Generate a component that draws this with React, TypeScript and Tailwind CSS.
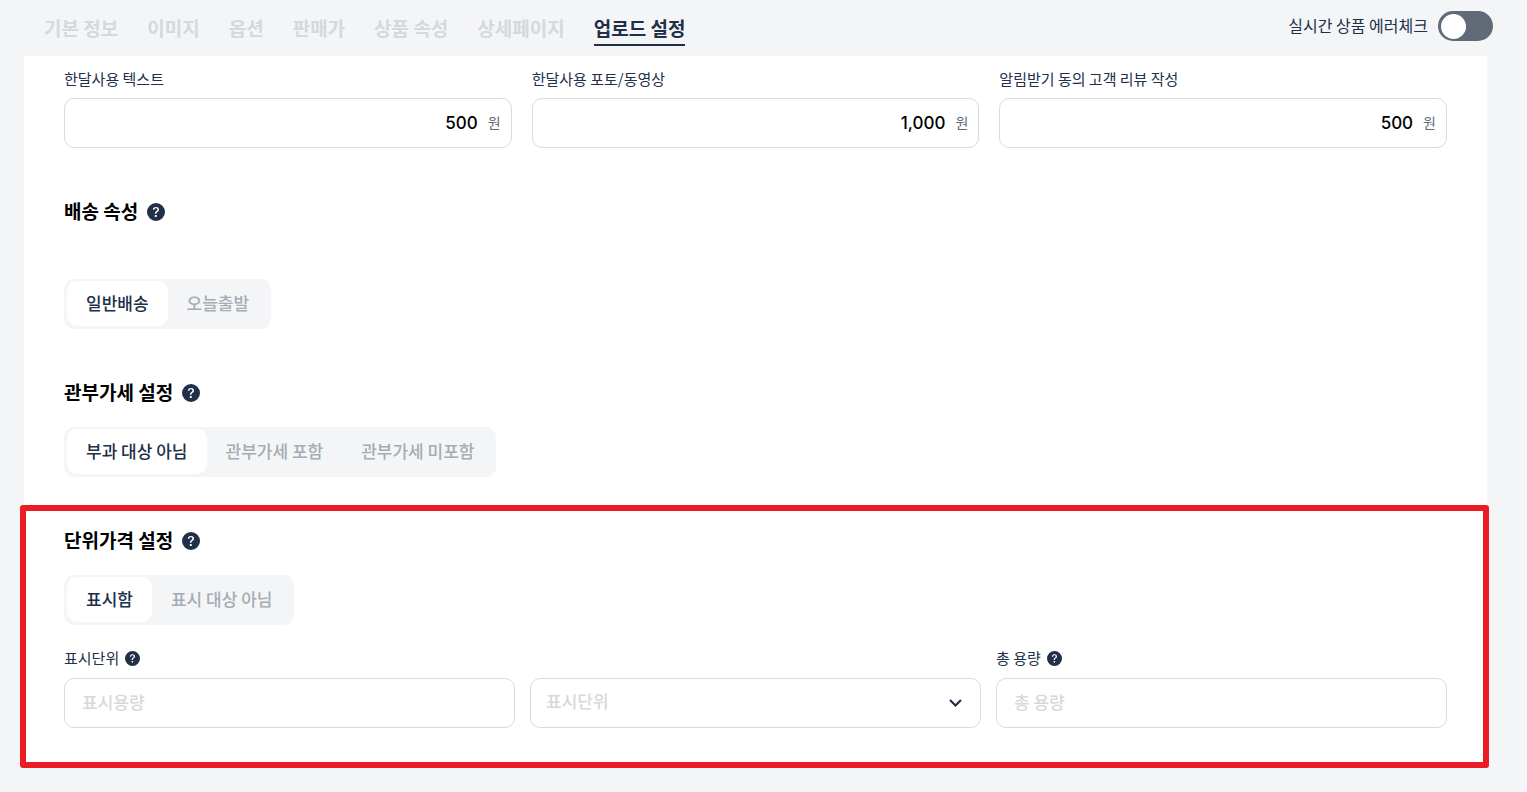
import { useId, useState } from "react";
import { BsQuestionCircleFill } from "react-icons/bs";

const tabs = ["기본 정보", "이미지", "옵션", "판매가", "상품 속성", "상세페이지", "업로드 설정"];

const reviewPoints = [
  { label: "한달사용 텍스트", amount: "500" },
  { label: "한달사용 포토/동영상", amount: "1,000" },
  { label: "알림받기 동의 고객 리뷰 작성", amount: "500" },
];

function Tabs() {
  const [active, setActive] = useState("업로드 설정");
  return (
    <nav className="flex gap-[29px]">
      {tabs.map((tab) => (
        <button
          key={tab}
          type="button"
          onClick={() => setActive(tab)}
          className={
            tab === active
              ? "border-b-2 border-[#212f48] text-[19px] leading-8 font-bold text-[#212f48]"
              : "border-b-2 border-transparent text-[19px] leading-8 font-bold text-[#d5d8dc]"
          }
        >
          {tab}
        </button>
      ))}
    </nav>
  );
}

function ErrorCheckSwitch() {
  const [on, setOn] = useState(false);
  return (
    <label className="flex items-center gap-2.5 text-base text-[#212f48]">
      <span className="pb-0.5">실시간 상품 에러체크</span>
      <input
        type="checkbox"
        role="switch"
        checked={on}
        onChange={(e) => setOn(e.target.checked)}
        className="flex h-[30px] w-[55px] cursor-pointer appearance-none items-center rounded-full bg-[#616b77] px-[3px] before:size-[25px] before:rounded-full before:bg-white checked:justify-end checked:bg-[#212f48]"
      />
    </label>
  );
}

function HelpButton({ topic, small = false }: { topic: string; small?: boolean }) {
  return (
    <button type="button" aria-label={`${topic} 도움말`} className="text-[#212f48]">
      <BsQuestionCircleFill className={small ? "size-[15px]" : "size-[18px]"} />
    </button>
  );
}

function Heading({ children }: { children: string }) {
  return (
    <div className="flex items-center gap-[9px]">
      <h2 className="pb-0.5 text-[19px] leading-[26px] font-bold text-black">{children}</h2>
      <HelpButton topic={children} />
    </div>
  );
}

function Segmented({ label, options }: { label: string; options: string[] }) {
  const [selected, setSelected] = useState(options[0]);
  return (
    <div role="group" aria-label={label} className="flex h-[50px] w-fit rounded-[10px] bg-[#f3f5f7] px-[3px] pt-0.5 pb-[3px]">
      {options.map((option) => (
        <button
          key={option}
          type="button"
          aria-pressed={option === selected}
          onClick={() => setSelected(option)}
          className={
            option === selected
              ? "rounded-[10px] bg-white px-[19px] pb-0.5 text-[17px] font-medium text-[#212f48]"
              : "rounded-[10px] px-[19px] pb-0.5 text-[17px] font-medium text-[#a6abb4]"
          }
        >
          {option}
        </button>
      ))}
    </div>
  );
}

function PointField({ label, amount }: { label: string; amount: string }) {
  const id = useId();
  return (
    <div className="flex flex-col gap-2">
      <label htmlFor={id} className="text-[15px] leading-[22px] text-[#212f48]">
        {label}
      </label>
      <div className="flex h-[50px] items-center gap-2.5 rounded-[10px] border border-[#d9dbde] bg-white px-2.5">
        <input
          id={id}
          defaultValue={amount}
          className="w-full min-w-0 flex-1 pt-0.5 text-right font-['Inter','Noto_Sans_CJK_KR',sans-serif] text-[17px] font-medium text-black outline-none"
        />
        <span className="pb-0.5 text-sm text-[#616b77]">원</span>
      </div>
    </div>
  );
}

const fieldClass =
  "h-[50px] w-full min-w-0 rounded-[10px] border border-[#d9dbde] bg-white px-[17px] pb-1 text-[17px] font-medium outline-none placeholder:text-[#d5d8dc]";

export default function App() {
  return (
    <div className="min-h-screen bg-[#f3f5f7] pb-6 font-['Noto_Sans_CJK_KR',sans-serif]">
      <header className="flex h-14 items-center justify-between pr-[34px] pb-1 pl-11">
        <div className="pt-1.5">
          <Tabs />
        </div>
        <ErrorCheckSwitch />
      </header>

      <main className="mr-10 ml-6 bg-white px-10 pt-3">
        <section className="grid grid-cols-3 gap-5">
          {reviewPoints.map((item) => (
            <PointField key={item.label} {...item} />
          ))}
        </section>

        <section className="mt-[50px] flex flex-col gap-[53px]">
          <Heading>배송 속성</Heading>
          <Segmented label="배송 속성" options={["일반배송", "오늘출발"]} />
        </section>

        <section className="mt-[50px] flex flex-col gap-5">
          <Heading>관부가세 설정</Heading>
          <Segmented label="관부가세 설정" options={["부과 대상 아님", "관부가세 포함", "관부가세 미포함"]} />
        </section>

        <section className="mt-7 -mr-[42px] -ml-11 rounded-[3px] border-6 border-[#eb1c24] bg-white pt-4 pr-9 pb-[34px] pl-[38px]">
          <div className="flex flex-col gap-5">
            <Heading>단위가격 설정</Heading>
            <Segmented label="단위가격 설정" options={["표시함", "표시 대상 아님"]} />
          </div>

          <div className="mt-[22px] grid grid-cols-3 gap-x-[15px]">
            <div className="col-span-2 flex flex-col gap-[9px]">
              <div className="flex items-center gap-1.5">
                <label htmlFor="unit-amount" className="text-[15px] leading-[22px] text-[#212f48]">
                  표시단위
                </label>
                <HelpButton topic="표시단위" small />
              </div>
              <div className="grid grid-cols-2 gap-[15px]">
                <input id="unit-amount" placeholder="표시용량" className={fieldClass} />
                <div className="relative">
                  <select
                    aria-label="표시단위"
                    defaultValue=""
                    className="h-[50px] w-full appearance-none rounded-[10px] border border-[#d9dbde] bg-white px-[15px] pb-1 text-[17px] font-medium text-[#d5d8dc] outline-none"
                  >
                    <option value="" disabled>
                      표시단위
                    </option>
                    <option value="g">g</option>
                    <option value="ml">ml</option>
                  </select>
                  <svg
                    viewBox="0 0 14 10"
                    className="pointer-events-none absolute top-5 right-[18px] h-2.5 w-3.5"
                    fill="none"
                    stroke="#212f48"
                    strokeWidth="2.2"
                    aria-hidden="true"
                  >
                    <path d="M1 2 6.5 7.5 12 2" />
                  </svg>
                </div>
              </div>
            </div>
            <div className="flex flex-col gap-[9px]">
              <div className="flex items-center gap-1.5">
                <label htmlFor="total-amount" className="text-[15px] leading-[22px] text-[#212f48]">
                  총 용량
                </label>
                <HelpButton topic="총 용량" small />
              </div>
              <input id="total-amount" placeholder="총 용량" className={fieldClass} />
            </div>
          </div>
        </section>
      </main>
    </div>
  );
}
